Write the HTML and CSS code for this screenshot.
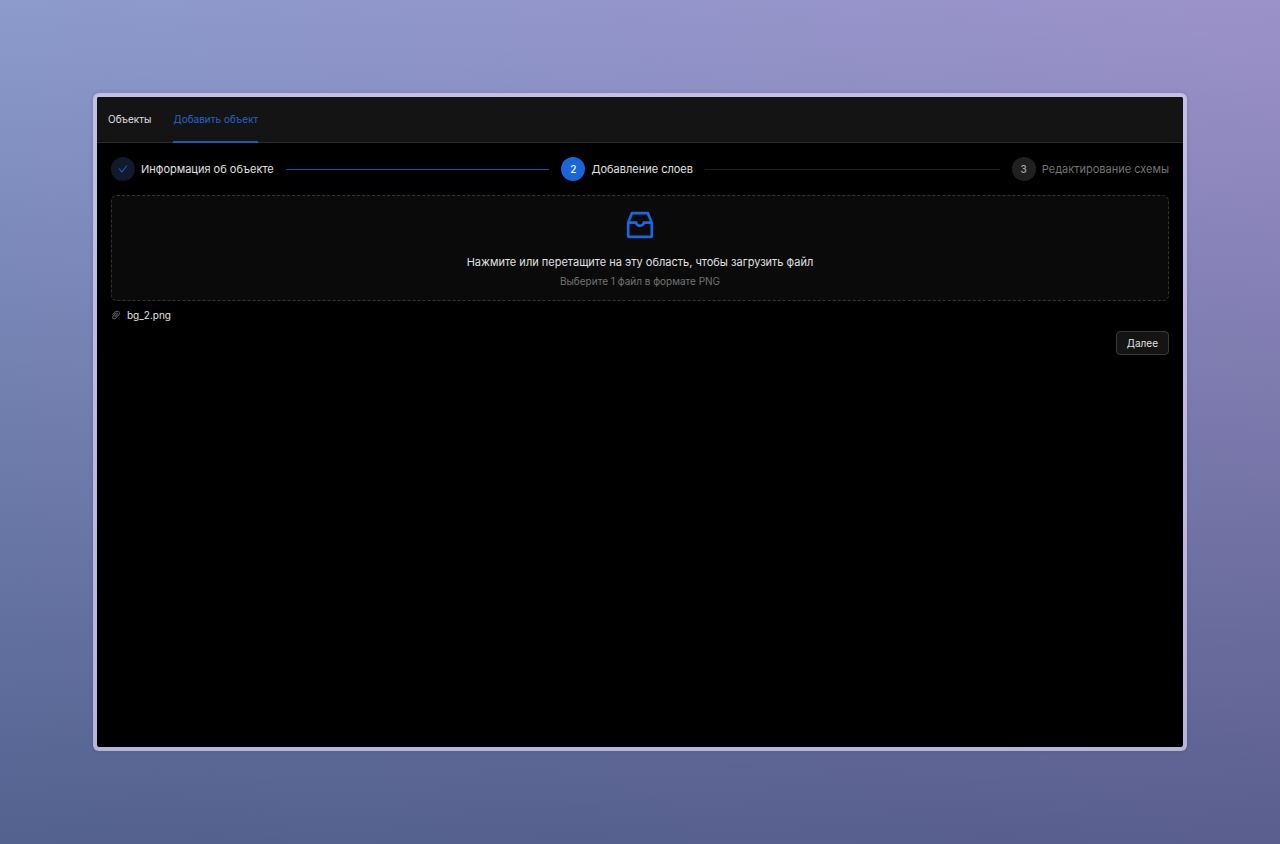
FILE: index.html
```html
<!DOCTYPE html>
<html lang="ru">
<head>
<meta charset="utf-8">
<meta name="viewport" content="width=device-width, initial-scale=1">
<title>Добавить объект</title>
<link rel="stylesheet" href="styles.css">
</head>
<body>
<div class="window">
  <header class="header">
    <nav class="menu">
      <a class="menu-item" href="#objects">Объекты</a>
      <a class="menu-item menu-item-active" href="#add" aria-current="page">Добавить объект</a>
    </nav>
  </header>
  <main class="content">
    <ol class="steps">
      <li class="step step-done">
        <span class="step-icon"><svg class="icon-check" viewBox="64 64 896 896" aria-hidden="true"><path d="M912 190h-69.9c-9.8 0-19.1 4.5-25.1 12.2L404.7 724.5 207 474a32 32 0 00-25.1-12.2H112c-6.7 0-10.4 7.7-6.3 12.9l273.9 347c12.8 16.2 37.4 16.2 50.3 0l488.4-618.9c4.1-5.1.4-12.8-6.3-12.8z"/></svg></span>
        <span class="step-title">Информация об объекте</span>
      </li>
      <li class="step step-active" aria-current="step">
        <span class="step-icon">2</span>
        <span class="step-title">Добавление слоев</span>
      </li>
      <li class="step step-wait">
        <span class="step-icon">3</span>
        <span class="step-title">Редактирование схемы</span>
      </li>
    </ol>
    <input class="file-input" type="file" id="layer-file" accept="image/png">
    <label class="dropzone" for="layer-file">
      <svg class="icon-inbox" viewBox="0 0 1024 1024" aria-hidden="true"><path d="M885.2 446.3l-.2-.8-112.2-285.1c-5-16.1-19.9-27.2-36.8-27.2H281.2c-17 0-32.1 11.3-36.9 27.6L139.4 443l-.3.7-.2.8c-1.3 4.9-1.7 9.9-1 14.8-.1 1.6-.2 3.2-.2 4.8V830a60.9 60.9 0 0060.8 60.8h627.2c33.5 0 60.8-27.3 60.9-60.8V464.1c0-1.3 0-2.6-.1-3.7.4-4.9 0-9.6-1.3-14.1zm-295.8-43l-.3 15.7c-.8 44.9-31.8 75.1-77.1 75.1-22.1 0-41.1-7.1-54.8-20.6S436 441.2 435.6 419l-.3-15.7H229.5L309 210h399.2l81.7 193.3H589.4zm-375 76.8h157.3c24.3 57.1 76 90.8 140.4 90.8 33.7 0 65-9.4 90.3-27.2 22.2-15.6 39.5-37.4 50.7-63.6h156.5V814H214.4V480.1z"/></svg>
      <span class="dropzone-text">Нажмите или перетащите на эту область, чтобы загрузить файл</span>
      <span class="dropzone-hint">Выберите 1 файл в формате PNG</span>
    </label>
    <ul class="file-list">
      <li class="file">
        <svg class="icon-clip" viewBox="64 64 896 896" aria-hidden="true"><path d="M779.3 196.6c-94.2-94.2-247.6-94.2-341.7 0l-261 260.8c-1.7 1.7-2.6 4-2.6 6.4s.9 4.7 2.6 6.4l36.9 36.9a9 9 0 0012.7 0l261-260.8c32.4-32.4 75.5-50.2 121.3-50.2s88.9 17.8 121.2 50.2c32.4 32.4 50.2 75.5 50.2 121.2 0 45.8-17.8 88.8-50.2 121.2l-266 265.9-43.1 43.1c-40.3 40.3-105.8 40.3-146.1 0-19.5-19.5-30.2-45.4-30.2-73s10.7-53.5 30.2-73l263.9-263.8c6.7-6.6 15.5-10.3 24.9-10.3h.1c9.4 0 18.1 3.7 24.7 10.3 6.7 6.7 10.3 15.5 10.3 24.9 0 9.3-3.7 18.1-10.3 24.7L372.4 653c-1.7 1.7-2.6 4-2.6 6.4s.9 4.7 2.6 6.4l36.9 36.9a9 9 0 0012.7 0l215.6-215.6c19.9-19.9 30.8-46.3 30.8-74.4s-11-54.6-30.8-74.4c-41.1-41.1-107.9-41-149 0L463 364 224.8 602.1A172.22 172.22 0 00174 724.8c0 46.3 18.1 89.8 50.8 122.5 33.9 33.8 78.3 50.7 122.7 50.7 44.4 0 88.8-16.9 122.6-50.7l309.2-309C824.8 492.7 850 432 850 367.5c.1-64.6-25.1-125.3-70.7-170.9z"/></svg>
        <span>bg_2.png</span>
      </li>
    </ul>
    <div class="actions">
      <button class="button" type="button">Далее</button>
    </div>
  </main>
</div>
</body>
</html>
```

FILE: styles.css
```css
* {
  box-sizing: border-box;
}

body {
  display: flex;
  min-height: 100vh;
  margin: 0;
  padding: 93px;
  background:
    linear-gradient(to bottom, rgba(45, 60, 103, 0), rgba(45, 60, 103, 0.6)),
    linear-gradient(to right, #8c9acc, #9c92ca);
  color: #e0e0e0;
  font-family: Inter, "Noto Sans", sans-serif;
  font-size: 10px;
  line-height: 16px;
}

.window {
  flex: 1;
  border: 4px solid rgba(214, 208, 238, 0.75);
  border-radius: 6px;
  background: #000 padding-box;
  box-shadow: 0 0 4px rgba(40, 30, 90, 0.15);
}

.header {
  padding: 0 11px;
  border-bottom: 1px solid #2c2c2c;
  border-radius: 2px 2px 0 0;
  background: #141414;
}

.menu {
  display: flex;
  gap: 22px;
}

.menu-item {
  height: 46px;
  margin-bottom: -1px;
  border-bottom: 2px solid transparent;
  color: inherit;
  line-height: 45px;
  text-decoration: none;
}

.menu-item-active {
  border-color: #1c58b8;
  color: #2364cf;
}

.content {
  padding: 14px;
}

.steps {
  display: flex;
  gap: 12px;
  margin: 0 0 14px;
  padding: 0;
  list-style: none;
}

.step {
  display: flex;
  flex: 1;
  align-items: center;
  gap: 6px;
  font-size: 11px;
  line-height: 24px;
  white-space: nowrap;
}

.step:last-child {
  flex: none;
}

.step:not(:last-child)::after {
  flex: 1;
  height: 1px;
  margin-left: 6px;
  background: #1e1e1e;
  content: "";
}

.step.step-done::after {
  background: #2a44ae;
}

.step-icon {
  display: flex;
  align-items: center;
  justify-content: center;
  width: 24px;
  height: 24px;
  border-radius: 50%;
  font-size: 10px;
  font-weight: 500;
}

.step-done .step-icon {
  background: #111a2c;
}

.step-active .step-icon {
  background: #1a66d9;
  color: #fff;
}

.step-wait {
  color: #737373;
}

.step-wait .step-icon {
  background: #202020;
  color: #a6a6a6;
}

.icon-check {
  width: 10px;
  height: 10px;
  fill: #1f62cf;
}

.file-input {
  position: absolute;
  width: 1px;
  height: 1px;
  opacity: 0;
}

.dropzone {
  display: flex;
  flex-direction: column;
  align-items: center;
  padding: 11px;
  border: 1px dashed #333;
  border-radius: 6px;
  background: #0a0a0a;
  cursor: pointer;
}

.icon-inbox {
  width: 36px;
  height: 36px;
  margin-bottom: 10px;
  fill: #1d66e0;
}

.dropzone-text {
  margin-bottom: 2px;
  font-size: 11px;
  line-height: 18px;
}

.dropzone-hint {
  color: #737373;
}

.file-list {
  margin: 6px 0 8px;
  padding: 0;
  list-style: none;
}

.file {
  display: flex;
  align-items: center;
  gap: 6px;
}

.icon-clip {
  width: 10px;
  height: 10px;
  fill: #737373;
}

.actions {
  display: flex;
  justify-content: flex-end;
}

.button {
  padding: 3px 10px;
  border: 1px solid #393939;
  border-radius: 4px;
  background: #141414;
  color: inherit;
  font: inherit;
}
```
